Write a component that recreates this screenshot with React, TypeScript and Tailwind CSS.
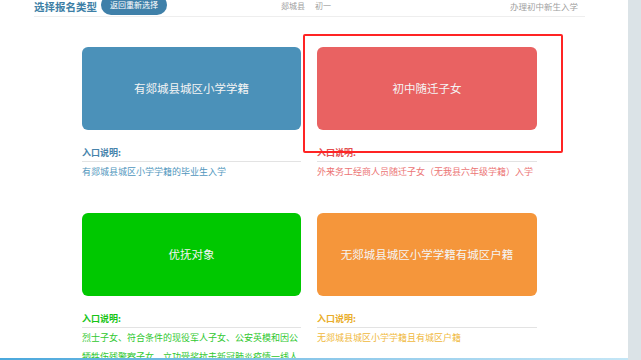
import React from "react";

type Entry = {
  title: string;
  desc: string;
  card: string;
  label: string;
  text: string;
};

const entries: Entry[] = [
  {
    title: "有郯城县城区小学学籍",
    desc: "有郯城县城区小学学籍的毕业生入学",
    card: "bg-[#4b91b9]",
    label: "text-[#4683ab]",
    text: "text-[#5096bd]",
  },
  {
    title: "初中随迁子女",
    desc: "外来务工经商人员随迁子女（无我县六年级学籍）入学",
    card: "bg-[#e96262]",
    label: "text-[#e24c4c]",
    text: "text-[#ec7474]",
  },
  {
    title: "优抚对象",
    desc: "烈士子女、符合条件的现役军人子女、公安英模和因公牺牲伤残警察子女、立功受奖抗击新冠肺炎疫情一线人员子女",
    card: "bg-[#00c800]",
    label: "text-[#16c416]",
    text: "text-[#2fc82f]",
  },
  {
    title: "无郯城县城区小学学籍有城区户籍",
    desc: "无郯城县城区小学学籍且有城区户籍",
    card: "bg-[#f5963b]",
    label: "text-[#e9ad2a]",
    text: "text-[#f0b93c]",
  },
];

const EntryCard: React.FC<{ e: Entry }> = ({ e }) => (
  <div>
    <button
      className={`w-full h-[83px] rounded-md ${e.card} flex items-center justify-center text-[11.5px] text-[#f4f4f4]`}
    >
      {e.title}
    </button>
    <div className={`mt-[16px] text-[9px] leading-[14px] font-bold pb-[1px] border-b border-[#e3e3e3] ${e.label}`}>
      入口说明:
    </div>
    <p className={`text-[9px] leading-[19px] ${e.text}`}>{e.desc}</p>
  </div>
);

export default function App() {
  return (
    <div
      className="w-[641px] h-[360px] flex overflow-hidden bg-white"
      style={{ fontFamily: '"Noto Sans CJK SC", "Noto Sans", sans-serif' }}
    >
      <div className="relative w-[628px] h-full flex flex-col">
        <div className="flex-1 overflow-hidden">
          {/* — top bar — */}
          <div className="ml-[34px] w-[551px] h-[17px] flex items-end border-b border-[#eeeeee]">
            <span className="text-[10.5px] leading-[14px] font-bold text-[#3d7fa6] mb-[2px]">选择报名类型</span>
            <button className="ml-[4px] h-[20px] px-[9px] rounded-full bg-[#3f80a9] text-[8px] text-white mb-[1px]">
              返回重新选择
            </button>
            <span className="ml-[114px] text-[8px] leading-[12px] text-[#a0a0a0] mb-[4px]">郯城县</span>
            <span className="ml-[10px] text-[8px] leading-[12px] text-[#a0a0a0] mb-[4px]">初一</span>
            <span className="ml-auto mr-[7px] text-[8.5px] leading-[12px] text-[#a0a0a0] mb-[4px]">办理初中新生入学</span>
          </div>

          {/* — entry grid — */}
          <div className="mt-[30px] ml-[82px] grid grid-cols-[219px_220px] gap-x-[16px] gap-y-[32px]">
            {entries.map((e) => (
              <EntryCard key={e.title} e={e} />
            ))}
          </div>
        </div>
        <div className="h-[2px] bg-gradient-to-r from-[#4aa8dc] to-[#c4e6f6]"></div>

        {/* annotation box */}
        <div className="absolute left-[303px] top-[34px] w-[260px] h-[119px] border-2 border-[#ff2424] rounded-[2px]"></div>
      </div>
      <div className="flex-1 bg-[#dbe3e7]"></div>
    </div>
  );
}
